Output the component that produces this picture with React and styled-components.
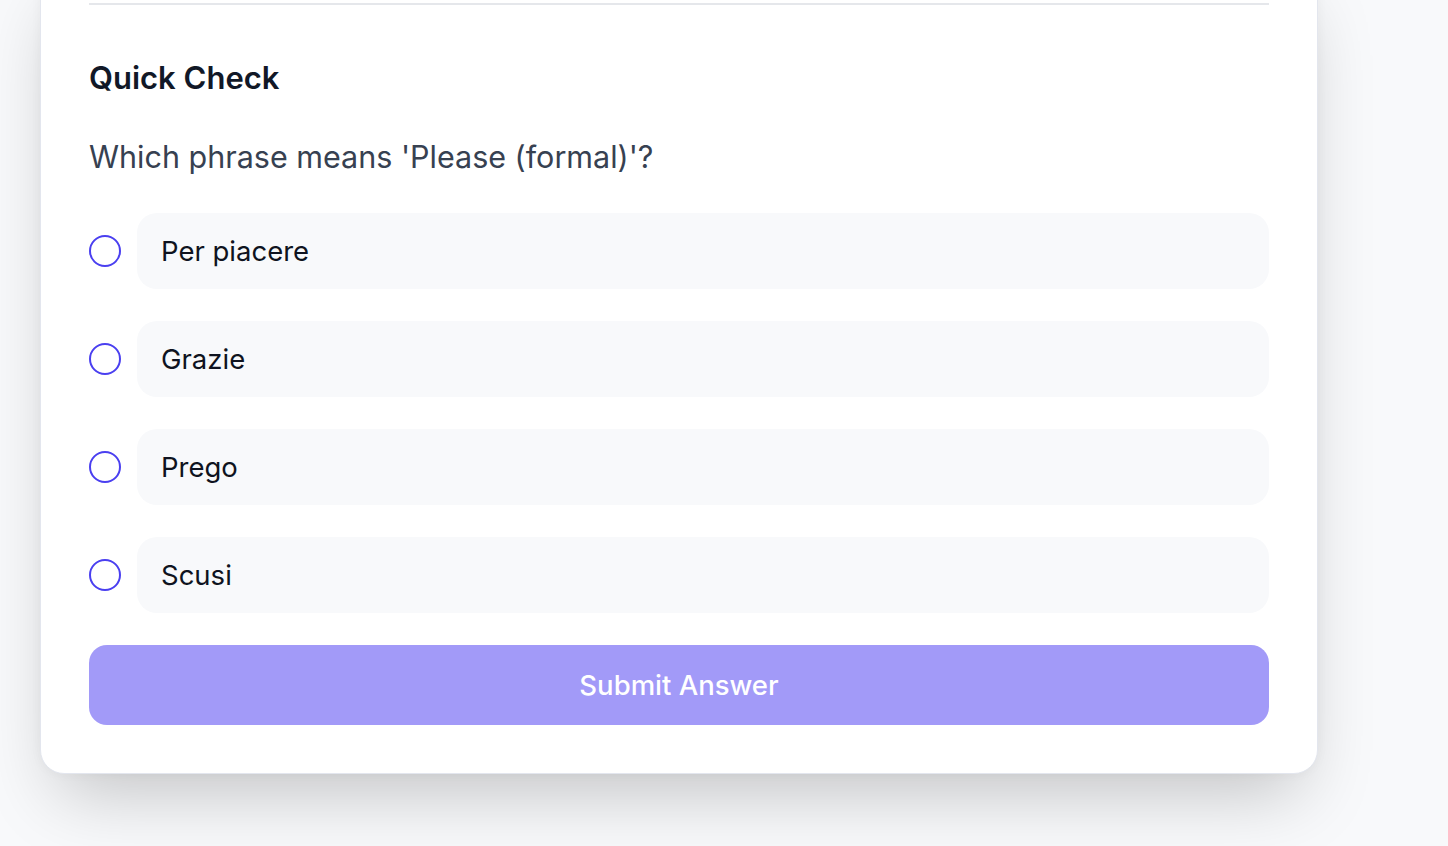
import React from "react";
import styled, { createGlobalStyle } from "styled-components";

const Global = createGlobalStyle`
  html, body { margin: 0; padding: 0; }
  body {
    background: #f8f9fb;
    font-family: Inter, "Noto Sans", "Liberation Sans", sans-serif;
    overflow: hidden;
  }
`;

const Page = styled.div`
  display: flow-root;
  width: 1448px;
  height: 846px;
  padding: 0 130px 0 40px;
  box-sizing: border-box;
`;

const Card = styled.section`
  margin-top: -40px;
  background: #ffffff;
  border: 1px solid #e3e6ee;
  border-radius: 24px;
  padding: 0 48px 48px;
  box-shadow: 0 36px 72px -18px rgba(0, 0, 0, 0.22), 0 0 12px rgba(0, 0, 0, 0.04);
`;

const Upper = styled.div`
  height: 42px;
`;

const Section = styled.div`
  border-top: 2px solid #e5e7eb;
  padding-top: 52px;
  display: flex;
  flex-direction: column;
`;

const Heading = styled.h3`
  margin: 0 0 37px;
  font-size: 31px;
  line-height: 42px;
  font-weight: 600;
  color: #111827;
`;

const Question = styled.p`
  margin: 0 0 35px;
  font-size: 30.5px;
  line-height: 42px;
  color: #374151;
`;

const Options = styled.div`
  display: flex;
  flex-direction: column;
  gap: 32px;
`;

const Row = styled.label`
  display: flex;
  align-items: center;
  gap: 16px;
  cursor: pointer;
`;

const Radio = styled.span`
  flex: none;
  width: 32px;
  height: 32px;
  box-sizing: border-box;
  border-radius: 50%;
  border: 2.5px solid #4a3ff0;
  background: #fff;
`;

const OptionBox = styled.span`
  flex: 1;
  background: #f8f9fb;
  border-radius: 20px;
  padding: 17px 24px;
  font-size: 27.5px;
  line-height: 42px;
  color: #0f1320;
`;

const Submit = styled.button`
  margin-top: 32px;
  height: 80px;
  width: 100%;
  border: none;
  border-radius: 18px;
  background: #a29af8;
  color: #ffffff;
  font-family: inherit;
  font-size: 27.5px;
  font-weight: 500;
  cursor: not-allowed;
`;

const options = ["Per piacere", "Grazie", "Prego", "Scusi"];

export default function App() {
  return (
    <>
      <Global />
      <Page>
        <Card>
          <Upper />
          <Section>
            <Heading>Quick Check</Heading>
            <Question>Which phrase means 'Please (formal)'?</Question>
            <Options>
              {options.map((o) => (
                <Row key={o}>
                  <Radio />
                  <OptionBox>{o}</OptionBox>
                </Row>
              ))}
            </Options>
            <Submit disabled>Submit Answer</Submit>
          </Section>
        </Card>
      </Page>
    </>
  );
}
